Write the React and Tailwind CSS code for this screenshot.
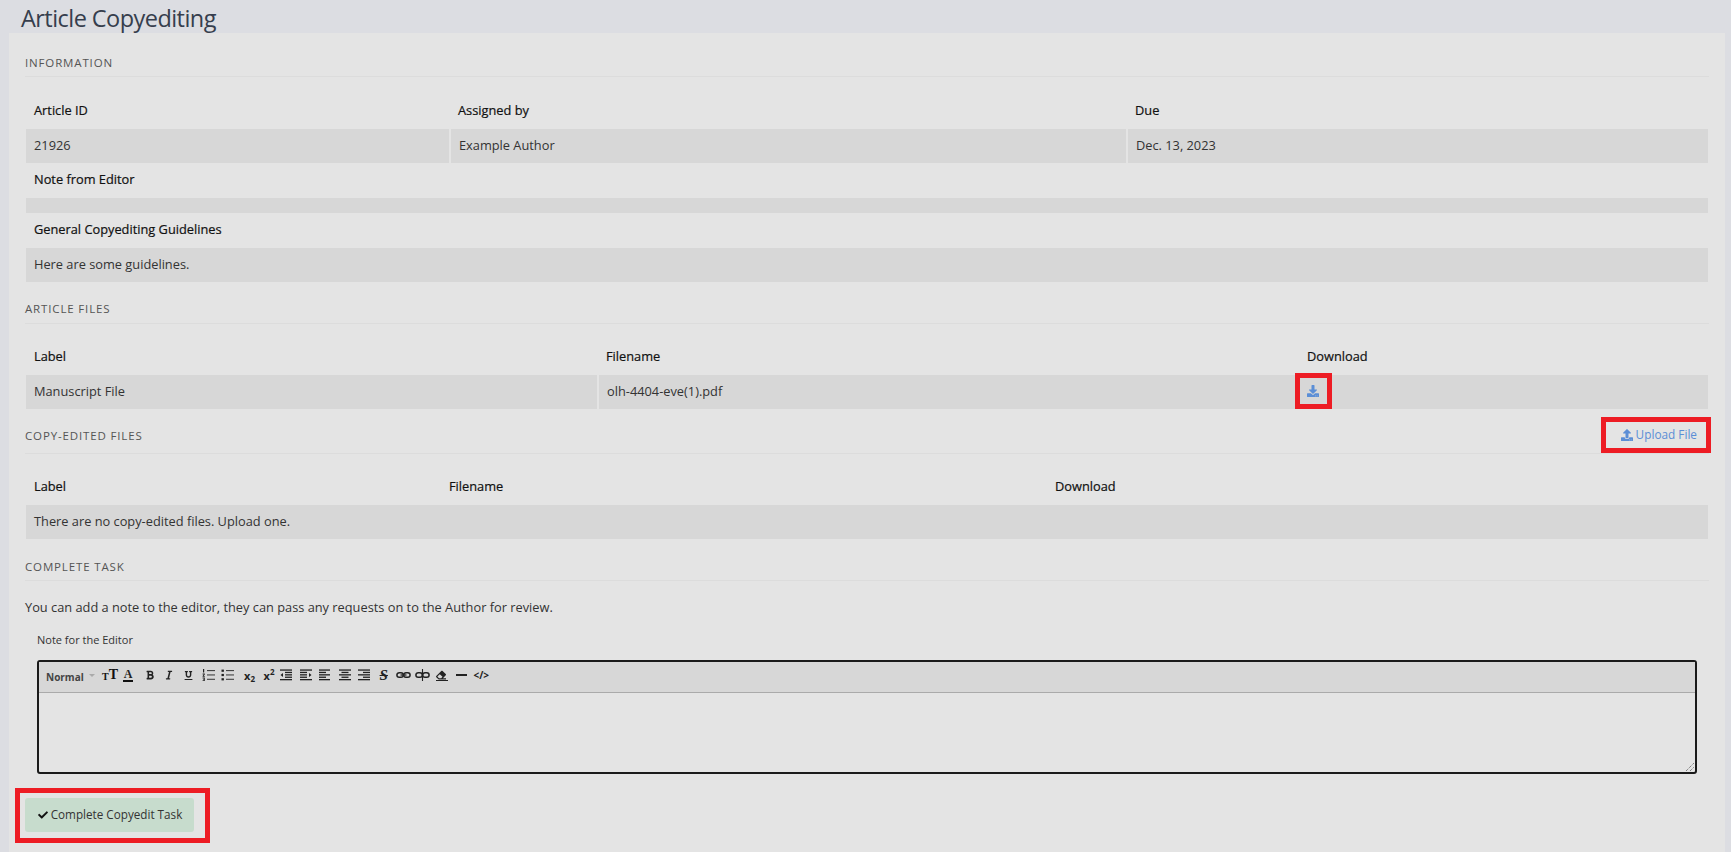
import React from 'react';
import { FaBold, FaCheck, FaDownload, FaEraser, FaItalic, FaUnderline, FaUpload } from 'react-icons/fa';

const SectionHead = ({ title, className = '', children }) => (
  <div className={`flex items-center justify-between border-b border-[#dcdcdc] ${className}`}>
    <h2 className="text-[11.5px] font-medium uppercase tracking-[0.85px] text-[#555]">{title}</h2>
    {children}
  </div>
);

const Th = ({ children, colSpan }) => (
  <th colSpan={colSpan} className="h-[35px] px-2 pb-[2px] text-left text-[12.8px] font-medium text-[#111] [-webkit-text-stroke:0.2px_#111]">
    {children}
  </th>
);

const Td = ({ children, colSpan, className = '' }) => (
  <td colSpan={colSpan} className={`h-[34px] bg-[#d7d7d7] px-2 text-[12.8px] text-[#333] border-r-2 border-[#e4e4e4] last:border-r-0 ${className}`}>
    {children}
  </td>
);

const Tool = ({ children, className = '' }) => (
  <span className={`flex h-[14px] w-[19.5px] items-center justify-center text-[#222] ${className}`}>{children}</span>
);

// thick bar icons for the alignment and indent buttons
const Bars = ({ rows, arrow }) => (
  <svg width="12" height="12" viewBox="0 0 12 12" fill="#222">
    {rows.map(([x, w], i) => (
      <rect key={i} x={x} y={0.4 + i * 2.4} width={w} height="1.3" />
    ))}
    {arrow === 'left' && <path d="M0.5 6 L3 4 V8 Z" />}
    {arrow === 'right' && <path d="M11.5 6 L9 4 V8 Z" />}
  </svg>
);

const ListIcon = ({ ordered }) => (
  <svg width="13" height="12" viewBox="0 0 13 12" fill="#222">
    <rect x="5" y="1.2" width="8" height="0.9" />
    <rect x="5" y="5.5" width="8" height="0.9" />
    <rect x="5" y="9.8" width="8" height="0.9" />
    {ordered ? (
      <path d="M1 0h1.2v3.4H1zM0.6 4.6h2.2v1L1.8 7h1v.8H0.6v-.9l1.2-1.4H.6zM0.6 8.6h2.2v3.4H0.6v-.8h1.3v-.6H1v-.7h.9v-.5H.6z" />
    ) : (
      <>
        <rect x="0.5" y="0.6" width="2.4" height="2.2" />
        <rect x="0.5" y="4.9" width="2.4" height="2.2" />
        <rect x="0.5" y="9.2" width="2.4" height="2.2" />
      </>
    )}
  </svg>
);

const LinkIcon = ({ broken }) => (
  <svg width="15" height="12" viewBox="0 0 15 12" fill="none" stroke="#222">
    <rect x="0.9" y="3.7" width="6.4" height="4.6" rx="2.3" strokeWidth="1.5" />
    <rect x="7.7" y="3.7" width="6.4" height="4.6" rx="2.3" strokeWidth="1.5" />
    {!broken && <path d="M4.5 6h6" strokeWidth="1.3" />}
    {broken && <path d="M7.5 0v12" strokeWidth="1.1" />}
  </svg>
);

const Sup = ({ sub }) => (
  <span className="relative text-[11px] font-bold leading-none text-[#222]">
    x
    <span className={`absolute left-full text-[8px] ${sub ? 'top-[5px]' : '-top-[2px]'}`}>2</span>
  </span>
);

const RedBox = ({ className }) => (
  <div className={`absolute border-[5px] border-[#ed1c24] ${className}`} />
);

const App = () => {
  return (
    <div className="relative h-[852px] overflow-hidden bg-[#dcdde2] font-['Open_Sans',sans-serif]">
      <h1 className="h-[33px] pl-[21px] text-[23.5px] font-medium leading-[36px] tracking-[-0.55px] text-[#363e4d]">Article Copyediting</h1>

      <div className="ml-[9px] h-[819px] w-[1716px] bg-[#e4e4e4] px-4">
        <SectionHead title="Information" className="h-[44px] pt-[16px]" />
        <table className="mx-px mt-[17px] w-[1682px] table-fixed border-collapse">
          <colgroup>
            <col className="w-[424px]" />
            <col className="w-[677px]" />
            <col />
          </colgroup>
          <tbody>
            <tr>
              <Th>Article ID</Th>
              <Th>Assigned by</Th>
              <Th>Due</Th>
            </tr>
            <tr>
              <Td>21926</Td>
              <Td>Example Author</Td>
              <Td>Dec. 13, 2023</Td>
            </tr>
            <tr>
              <Th colSpan={3}>Note from Editor</Th>
            </tr>
            <tr>
              <Td colSpan={3} className="!h-[15px]" />
            </tr>
            <tr>
              <Th colSpan={3}>General Copyediting Guidelines</Th>
            </tr>
            <tr>
              <Td colSpan={3}>Here are some guidelines.</Td>
            </tr>
          </tbody>
        </table>

        <SectionHead title="Article Files" className="mt-[17px] h-[25px] pb-[5px]" />
        <table className="mx-px mt-[16px] w-[1682px] table-fixed border-collapse">
          <colgroup>
            <col className="w-[572px]" />
            <col className="w-[701px]" />
            <col />
          </colgroup>
          <tbody>
            <tr>
              <Th>Label</Th>
              <Th>Filename</Th>
              <Th>Download</Th>
            </tr>
            <tr>
              <Td>Manuscript File</Td>
              <Td>olh-4404-eve(1).pdf</Td>
              <Td>
                <FaDownload size={12} className="-ml-[1px] -mt-[2px] text-[#5b8ed6]" />
              </Td>
            </tr>
          </tbody>
        </table>

        <SectionHead title="Copy-edited Files" className="mt-[17px] h-[28px] pb-[7px]">
          <a className="mr-[12px] mb-[3px] flex items-center gap-[3px] text-[11.8px] text-[#5b8ed6]">
            <FaUpload size={12} />
            Upload File
          </a>
        </SectionHead>
        <table className="mx-px mt-[16px] w-[1682px] table-fixed border-collapse">
          <colgroup>
            <col className="w-[415px]" />
            <col className="w-[606px]" />
            <col />
          </colgroup>
          <tbody>
            <tr>
              <Th>Label</Th>
              <Th>Filename</Th>
              <Th>Download</Th>
            </tr>
            <tr>
              <Td colSpan={3}>There are no copy-edited files. Upload one.</Td>
            </tr>
          </tbody>
        </table>

        <SectionHead title="Complete Task" className="mt-[17px] h-[25px] pb-[3px]" />
        <p className="mt-[16px] text-[12.8px] leading-[20px] text-[#333]">
          You can add a note to the editor, they can pass any requests on to the Author for review.
        </p>

        <label className="mt-[15px] ml-3 block text-[11px] leading-[16px] text-[#333]">Note for the Editor</label>

        <div className="relative mt-[12px] ml-3 h-[114px] w-[1660px] rounded-[3px] border-2 border-[#1a1a1a]">
          <div className="flex h-[31px] items-center border-b border-[#aaa] bg-[#d7d7d7] pb-[4px] pl-[7px]">
            <span className="w-[43px] pt-[5px] text-[10px] font-bold text-[#444]">Normal</span>
            <span className="mr-[6px] h-0 w-0 border-x-[3px] border-t-[3px] border-x-transparent border-t-[#aaa]" />
            <span className="flex w-[18px] items-end justify-center font-['Liberation_Serif',serif] font-bold leading-none text-[#111]">
              <span className="text-[10px]">T</span>
              <span className="text-[14px]">T</span>
            </span>
            <span className="mr-[3px] flex w-[18px] justify-center font-['Liberation_Serif',serif] text-[12px] font-bold leading-[12px] text-[#222]">
              <span className="border-b-2 border-[#111] px-[1px]">A</span>
            </span>
            <Tool><FaBold size={10} /></Tool>
            <Tool><FaItalic size={10} /></Tool>
            <Tool><FaUnderline size={9} /></Tool>
            <Tool><ListIcon ordered /></Tool>
            <Tool><ListIcon /></Tool>
            <Tool><Sup sub /></Tool>
            <Tool><Sup /></Tool>
            <Tool><Bars rows={[[0, 12], [5, 7], [5, 7], [5, 7], [0, 12]]} arrow="left" /></Tool>
            <Tool><Bars rows={[[0, 12], [0, 7], [0, 7], [0, 7], [0, 12]]} arrow="right" /></Tool>
            <Tool><Bars rows={[[0, 11], [0, 7], [0, 11], [0, 7], [0, 11]]} /></Tool>
            <Tool><Bars rows={[[0, 12], [2.5, 7], [0, 12], [2.5, 7], [0, 12]]} /></Tool>
            <Tool><Bars rows={[[0, 12], [5, 7], [0, 12], [5, 7], [0, 12]]} /></Tool>
            <Tool className="font-['Liberation_Serif',serif] text-[15px] font-bold italic">
              <span className="line-through decoration-1">S</span>
            </Tool>
            <Tool><LinkIcon /></Tool>
            <Tool><LinkIcon broken /></Tool>
            <Tool>
              <span className="flex flex-col items-start border-b border-[#222] pr-[2px]">
                <FaEraser size={10} />
              </span>
            </Tool>
            <Tool><span className="h-[2px] w-[11px] bg-[#222]" /></Tool>
            <Tool className="text-[10px] font-bold leading-none">{'</>'}</Tool>
          </div>
          <svg width="10" height="10" viewBox="0 0 10 10" className="absolute bottom-0 right-0" stroke="#555" strokeDasharray="1 1">
            <path d="M1 9 L9 1 M5 9 L9 5" />
          </svg>
        </div>

        <button className="mt-[24px] flex h-[34px] w-[169px] items-center justify-center gap-[3px] rounded-[3px] bg-[#c7dccd] pl-[1px] text-[11.7px] text-[#333]">
          <FaCheck size={10} className="text-[#111]" />
          Complete Copyedit Task
        </button>
      </div>

      <RedBox className="left-[1295px] top-[373px] h-[36px] w-[37px]" />
      <RedBox className="left-[1601px] top-[417px] h-[36px] w-[110px]" />
      <RedBox className="left-[15px] top-[788px] h-[55px] w-[195px]" />
    </div>
  );
};

export default App;
